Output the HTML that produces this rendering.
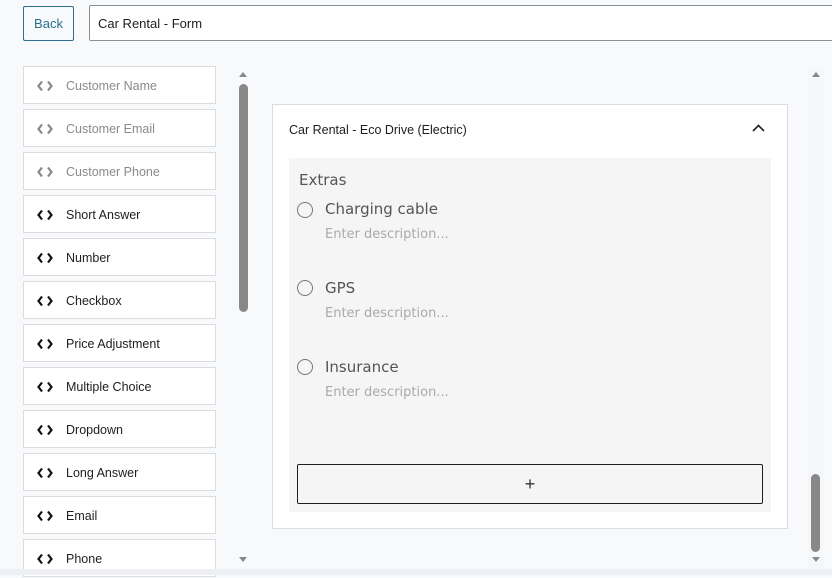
<!DOCTYPE html>
<html><head><style>
*{box-sizing:border-box;margin:0;padding:0}
body{width:832px;height:575px;background:#f8f9fb;font-family:"Liberation Sans","DejaVu Sans",sans-serif;position:relative;overflow:hidden}
.abs{position:absolute}
.back{left:23px;top:6px;width:51px;height:35px;border:1px solid #2a6f8e;border-radius:2px;color:#2a6f8e;font-size:13px;line-height:34px;text-align:center;background:#f8f9fb}
.title{left:89px;top:5px;width:760px;height:36px;border:1px solid #8c8f94;border-radius:2px;background:#fff;font-size:13px;line-height:36px;padding-left:8px;color:#1e1e1e}
.item{position:absolute;left:23px;width:193px;height:38px;background:#fff;border:1px solid #dcdcde;font-size:12.5px;color:#1e1e1e;line-height:38px;padding-left:42px}
.item.dim{color:#8a8a8a}
.item svg{position:absolute;left:13px;top:13px}
.card{left:272px;top:104px;width:516px;height:425px;background:#fff;border:1px solid #dcdcde}
.inner{left:289px;top:158px;width:482px;height:354px;background:#f5f5f5}
.opt{position:absolute;left:297px;font-size:15px;color:#555;font-family:"DejaVu Sans",sans-serif}
.radio{position:absolute;left:297px;width:16px;height:16px;border:1.5px solid #777;border-radius:50%;background:#f5f5f5}
.desc{position:absolute;left:325px;font-size:13px;color:#aaa;font-family:"DejaVu Sans",sans-serif}
</style></head><body>
<div class="abs back">Back</div>
<div class="abs title">Car Rental - Form</div>

<div class="item dim" style="top:66px"><svg width="16" height="12" viewBox="0 0 16 12"><path d="M5 1.5L1.5 6 5 10.5M11 1.5l3.5 4.5-3.5 4.5" stroke="#888" stroke-width="2.2" fill="none"/></svg>Customer Name</div>
<div class="item dim" style="top:109px"><svg width="16" height="12" viewBox="0 0 16 12"><path d="M5 1.5L1.5 6 5 10.5M11 1.5l3.5 4.5-3.5 4.5" stroke="#888" stroke-width="2.2" fill="none"/></svg>Customer Email</div>
<div class="item dim" style="top:152px"><svg width="16" height="12" viewBox="0 0 16 12"><path d="M5 1.5L1.5 6 5 10.5M11 1.5l3.5 4.5-3.5 4.5" stroke="#888" stroke-width="2.2" fill="none"/></svg>Customer Phone</div>
<div class="item" style="top:195px"><svg width="16" height="12" viewBox="0 0 16 12"><path d="M5 1.5L1.5 6 5 10.5M11 1.5l3.5 4.5-3.5 4.5" stroke="#111" stroke-width="2.2" fill="none"/></svg>Short Answer</div>
<div class="item" style="top:238px"><svg width="16" height="12" viewBox="0 0 16 12"><path d="M5 1.5L1.5 6 5 10.5M11 1.5l3.5 4.5-3.5 4.5" stroke="#111" stroke-width="2.2" fill="none"/></svg>Number</div>
<div class="item" style="top:281px"><svg width="16" height="12" viewBox="0 0 16 12"><path d="M5 1.5L1.5 6 5 10.5M11 1.5l3.5 4.5-3.5 4.5" stroke="#111" stroke-width="2.2" fill="none"/></svg>Checkbox</div>
<div class="item" style="top:324px"><svg width="16" height="12" viewBox="0 0 16 12"><path d="M5 1.5L1.5 6 5 10.5M11 1.5l3.5 4.5-3.5 4.5" stroke="#111" stroke-width="2.2" fill="none"/></svg>Price Adjustment</div>
<div class="item" style="top:367px"><svg width="16" height="12" viewBox="0 0 16 12"><path d="M5 1.5L1.5 6 5 10.5M11 1.5l3.5 4.5-3.5 4.5" stroke="#111" stroke-width="2.2" fill="none"/></svg>Multiple Choice</div>
<div class="item" style="top:410px"><svg width="16" height="12" viewBox="0 0 16 12"><path d="M5 1.5L1.5 6 5 10.5M11 1.5l3.5 4.5-3.5 4.5" stroke="#111" stroke-width="2.2" fill="none"/></svg>Dropdown</div>
<div class="item" style="top:453px"><svg width="16" height="12" viewBox="0 0 16 12"><path d="M5 1.5L1.5 6 5 10.5M11 1.5l3.5 4.5-3.5 4.5" stroke="#111" stroke-width="2.2" fill="none"/></svg>Long Answer</div>
<div class="item" style="top:496px"><svg width="16" height="12" viewBox="0 0 16 12"><path d="M5 1.5L1.5 6 5 10.5M11 1.5l3.5 4.5-3.5 4.5" stroke="#111" stroke-width="2.2" fill="none"/></svg>Email</div>
<div class="item" style="top:539px"><svg width="16" height="12" viewBox="0 0 16 12"><path d="M5 1.5L1.5 6 5 10.5M11 1.5l3.5 4.5-3.5 4.5" stroke="#111" stroke-width="2.2" fill="none"/></svg>Phone</div>

<div class="abs" style="left:239px;top:72px;width:0;height:0;border-left:4px solid transparent;border-right:4px solid transparent;border-bottom:5px solid #888"></div>
<div class="abs" style="left:239px;top:84px;width:9px;height:228px;background:#888;border-radius:5px"></div>
<div class="abs" style="left:239px;top:557px;width:0;height:0;border-left:4px solid transparent;border-right:4px solid transparent;border-top:5px solid #888"></div>

<div class="abs" style="left:808px;top:66px;width:16px;height:504px;background:#f6f7f9"></div>
<div class="abs" style="left:812px;top:72px;width:0;height:0;border-left:4px solid transparent;border-right:4px solid transparent;border-bottom:5px solid #888"></div>
<div class="abs" style="left:811px;top:474px;width:9px;height:78px;background:#888;border-radius:5px"></div>
<div class="abs" style="left:812px;top:557px;width:0;height:0;border-left:4px solid transparent;border-right:4px solid transparent;border-top:5px solid #888"></div>

<div class="abs card"></div>
<div class="abs" style="left:289px;top:123px;font-size:12.5px;color:#1e1e1e">Car Rental - Eco Drive (Electric)</div>
<svg class="abs" style="left:752px;top:124px" width="13" height="8" viewBox="0 0 13 8"><path d="M1 7l5.5-5.5L12 7" stroke="#1e1e1e" stroke-width="1.6" fill="none"/></svg>
<div class="abs inner"></div>
<div class="abs" style="left:299px;top:171px;font-size:15px;color:#555;font-family:'DejaVu Sans',sans-serif">Extras</div>

<div class="radio" style="top:202px"></div>
<div class="opt" style="left:325px;top:200px">Charging cable</div>
<div class="desc" style="top:227px">Enter description...</div>
<div class="radio" style="top:280px"></div>
<div class="opt" style="left:325px;top:279px">GPS</div>
<div class="desc" style="top:306px">Enter description...</div>
<div class="radio" style="top:359px"></div>
<div class="opt" style="left:325px;top:358px">Insurance</div>
<div class="desc" style="top:385px">Enter description...</div>

<div class="abs" style="left:297px;top:464px;width:466px;height:40px;border:1px solid #1e1e1e;border-radius:2px;text-align:center;line-height:38px;font-size:18px;color:#333">+</div>

<div class="abs" style="left:0;top:569px;width:832px;height:6px;background:#eef0f6"></div>
</body></html>
